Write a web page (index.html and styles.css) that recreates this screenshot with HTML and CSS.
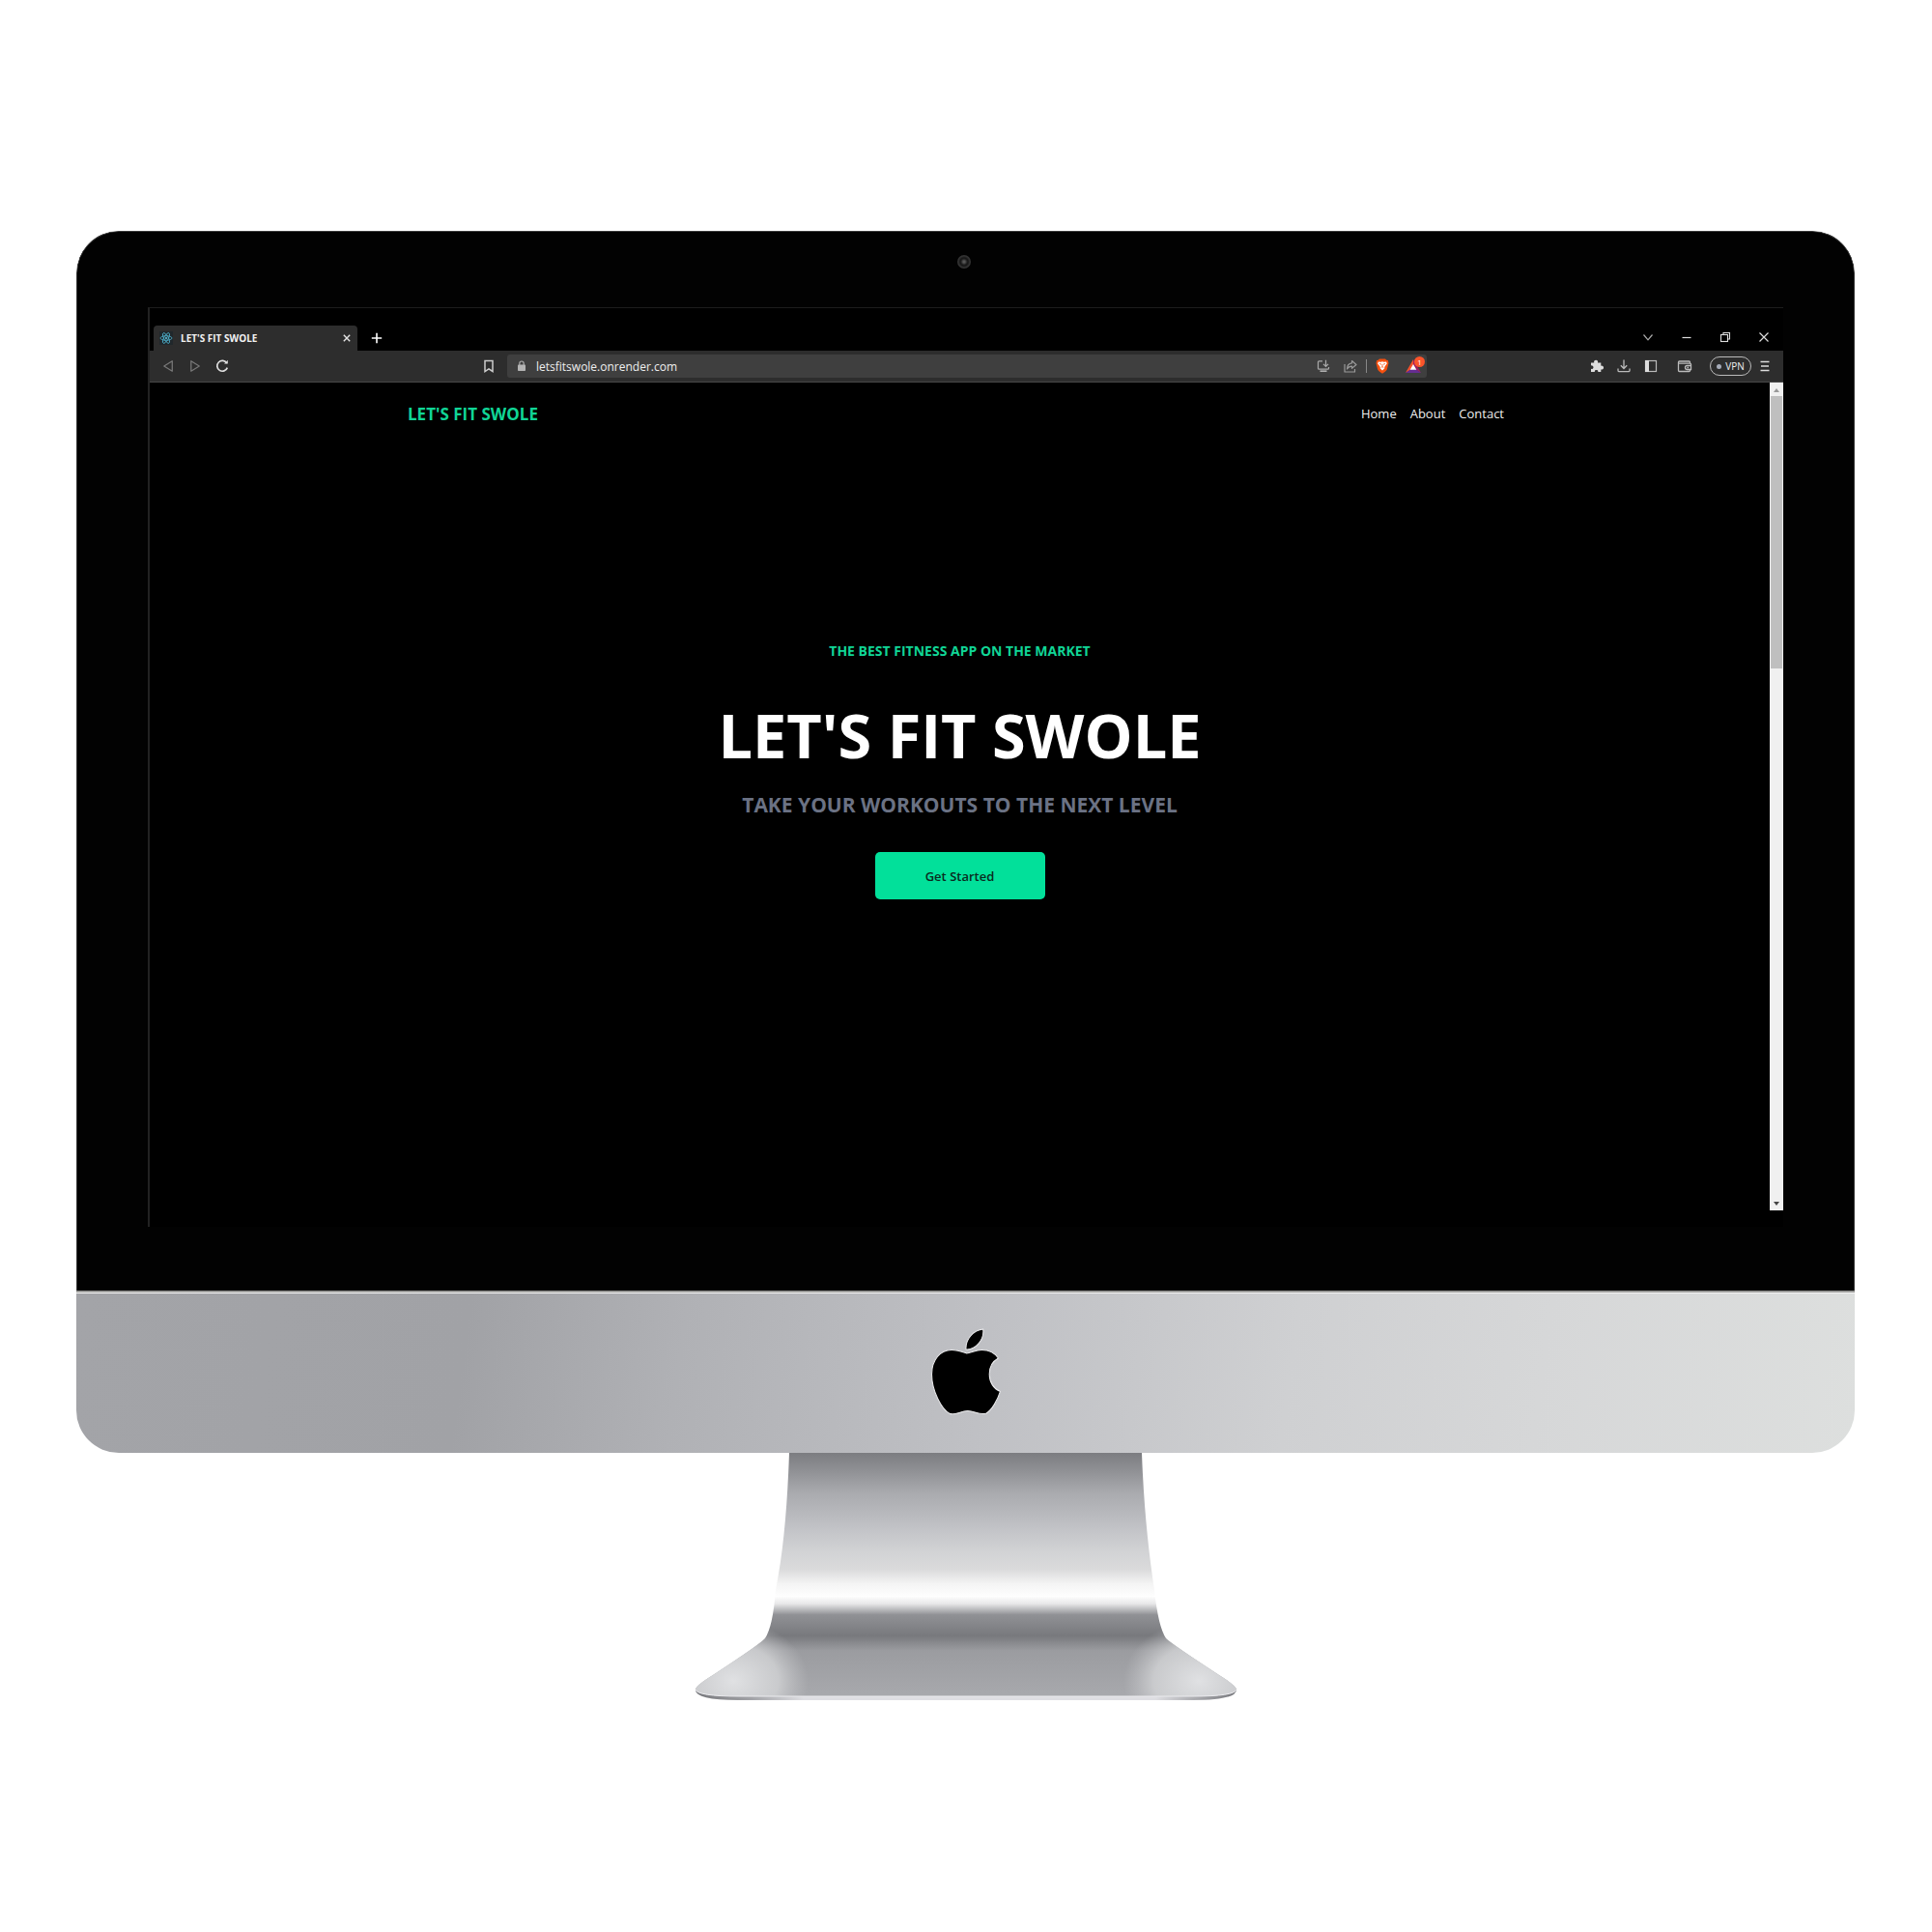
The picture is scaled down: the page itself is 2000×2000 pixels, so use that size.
FILE: index.html
```html
<!DOCTYPE html>
<html lang="en">
<head>
<meta charset="utf-8">
<title>LET'S FIT SWOLE</title>
<link rel="stylesheet" href="styles.css">
</head>
<body>
<div class="monitor">
  <div class="bezel">
    <div class="bezel-top"><span class="camera"></span></div>
    <div class="screen">
      <div class="tab-strip">
        <div class="tab">
          <svg class="favicon" width="14" height="14" viewBox="0 0 14 14" fill="none" stroke="#4fb3cf" stroke-width=".8"><rect width="14" height="14" fill="#20272b" stroke="none"/><ellipse cx="7" cy="7" rx="6" ry="2.3"/><ellipse cx="7" cy="7" rx="6" ry="2.3" transform="rotate(60 7 7)"/><ellipse cx="7" cy="7" rx="6" ry="2.3" transform="rotate(120 7 7)"/><circle cx="7" cy="7" r=".8" fill="#9be4f5"/></svg>
          <span class="tab-title">LET'S FIT SWOLE</span>
          <button class="tab-close" aria-label="Close tab"><svg width="8" height="8" viewBox="0 0 8 8" stroke="#e4e4e4" stroke-width="1.4"><path d="M.8.8l6.4 6.4M7.2.8L.8 7.2"/></svg></button>
        </div>
        <button class="new-tab" aria-label="New tab"><svg width="12" height="12" viewBox="0 0 12 12" stroke="#fff" stroke-width="1.6"><path d="M6 .8v10.4M.8 6h10.4"/></svg></button>
        <div class="window-controls">
          <button aria-label="Search tabs"><svg width="12" height="12" viewBox="0 0 12 12" fill="none" stroke="#aaa" stroke-width="1.2"><path d="M1.5 3.5L6 8.8l4.500-5.300"/></svg></button>
          <button aria-label="Minimize"><svg width="12" height="12" viewBox="0 0 12 12" stroke="#ddd" stroke-width="1.2"><path d="M1.500 6.500h9"/></svg></button>
          <button aria-label="Restore"><svg width="12" height="12" viewBox="0 0 12 12" fill="none" stroke="#ddd" stroke-width="1.1"><rect x="1.500" y="3.500" width="7" height="7"/><path d="M4 3.500v-2h6.500v6.500h-2"/></svg></button>
          <button aria-label="Close window"><svg width="12" height="12" viewBox="0 0 12 12" stroke="#ddd" stroke-width="1.2"><path d="M1.500 1.500l9 9M10.500 1.500l-9 9"/></svg></button>
        </div>
      </div>
      <div class="toolbar">
        <div class="nav-tools">
          <button aria-label="Back"><svg width="12" height="14" viewBox="0 0 12 14" fill="none" stroke="#777" stroke-width="1.300" stroke-linejoin="round"><path d="M10.300 1.800v10.400L1.800 7z"/></svg></button>
          <button aria-label="Forward"><svg width="12" height="14" viewBox="0 0 12 14" fill="none" stroke="#777" stroke-width="1.300" stroke-linejoin="round"><path d="M1.800 1.800v10.400L10.300 7z"/></svg></button>
          <button aria-label="Reload"><svg width="14" height="14" viewBox="0 0 14 14" fill="none" stroke="#ddd" stroke-width="1.700"><path d="M11.800 4A5.400 5.400 0 1 0 12.300 8.600"/><path d="M9 4.500h3.800V.800z" fill="#ddd" stroke="none"/></svg></button>
          <button class="bookmark" aria-label="Bookmark this page"><svg width="12" height="14" viewBox="0 0 12 14" fill="none" stroke="#ccc" stroke-width="1.500"><path d="M2 1.500h8v11L6 9.800 2 12.500z"/></svg></button>
        </div>
        <div class="address">
          <svg width="10" height="12" viewBox="0 0 10 12"><path d="M2.800 5V3.200a2.200 2.200 0 0 1 4.400 0V5" fill="none" stroke="#aaa" stroke-width="1.200"/><rect x="1" y="4.500" width="8" height="6.500" rx=".8" fill="#b4b4b4"/></svg>
          <input class="url" type="text" value="letsfitswole.onrender.com" aria-label="Address">
          <button aria-label="Install app"><svg width="14" height="14" viewBox="0 0 14 14" fill="none" stroke="#aaa" stroke-width="1.200"><path d="M6 1.800H2.500q-1 0-1 1v6.400q0 1 1 1h9q1 0 1-1V8M9.500.800v6M7 4.800l2.500 2.500L12 4.800"/><path d="M3.500 11.500h7v1.300h-7z" fill="#ccc" stroke="none"/></svg></button>
          <button aria-label="Share"><svg width="14" height="14" viewBox="0 0 14 14" fill="none" stroke="#999" stroke-width="1.200" stroke-linejoin="round"><path d="M1 5v8h10.500v-3M8.500 1.500L13 5.500 8.500 9.300V7.200C6 7.200 4.500 8.300 3.500 10c0-3.500 2-5.800 5-6.200z"/></svg></button>
          <span class="divider"></span>
          <button aria-label="Brave Shields"><svg width="14" height="16" viewBox="0 0 14 16"><path d="M4 .5h6l1.300 1.300 1.500.2.700 3-1.700 6.500c-.4 1.500-3 3-4.800 4.200C5.200 14.500 2.600 13 2.200 11.500L.5 5l.7-3 1.500-.2z" fill="#f4500f"/><path d="M3 3.500l2.500.3L7 3.300l1.500.5L11 3.500l.8 1.800-2.600 3.600.2 1.400L7 12.400l-2.400-2.100.2-1.400-2.600-3.600z" fill="#fff"/><path d="M4 5.500l2 .7M10 5.500l-2 .7M7 6v2.500L5.600 9.700M7 8.500l1.400 1.200" stroke="#f4500f" stroke-width=".8" fill="none"/></svg></button>
          <button class="rewards" aria-label="Brave Rewards, 1 new"><svg width="16" height="14" viewBox="0 0 16 14"><path d="M8 0L0 14l8-5z" fill="#f4512c"/><path d="M8 0l8 14-8-5z" fill="#9e1f63"/><path d="M0 14h16L8 8.500z" fill="#662d91"/><path d="M8 5l3.300 5.800H4.700z" fill="#fff"/></svg><span class="badge">1</span></button>
        </div>
        <div class="tools">
          <button aria-label="Extensions"><svg width="14" height="14" viewBox="0 0 14 14" fill="#ddd"><path d="M1 3.500h3.300a2 2 0 1 1 3.600 0h3.400v3.200a2 2 0 1 1 0 3.700V13H8.200a1.700 1.700 0 1 0-3.300 0H1v-3.200a1.800 1.800 0 1 0 0-3.300z"/></svg></button>
          <button aria-label="Downloads"><svg width="14" height="14" viewBox="0 0 14 14" fill="none" stroke="#bbb" stroke-width="1.300"><path d="M7 .5v8.800M3.800 6.300L7 9.500l3.200-3.200M1 9.500v2q0 1.200 1.200 1.200h9.600q1.200 0 1.200-1.200v-2"/></svg></button>
          <button aria-label="Sidebar"><svg width="14" height="14" viewBox="0 0 14 14"><rect x="1.500" y="1.500" width="11" height="11" fill="none" stroke="#bbb" stroke-width="1.200"/><path d="M1 1h4v12H1z" fill="#ddd"/></svg></button>
          <button class="wallet" aria-label="Wallet"><svg width="16" height="14" viewBox="0 0 16 14" fill="none" stroke="#bbb" stroke-width="1.300"><path d="M13.500 4.500V3q0-1-1-1H2.500q-1 0-1 1v8.500q0 1 1 1h10q1 0 1-1V11M1.500 4.200h12q1 0 1 1v6M14.500 6.500h-4a2 2 0 0 0 0 4h4zM10.500 8.500h1.500"/></svg></button>
          <button class="vpn"><span class="vpn-dot"></span>VPN</button>
          <button aria-label="Menu"><svg width="12" height="12" viewBox="0 0 12 12" stroke="#ddd" stroke-width="1.300"><path d="M1.500 1.500h9M2 6h8M1.500 10.500h9"/></svg></button>
        </div>
      </div>
      <div class="viewport">
        <div class="site">
          <header class="site-header">
            <a class="brand" href="#">LET'S FIT SWOLE</a>
            <nav class="site-nav">
              <a href="#">Home</a>
              <a href="#about">About</a>
              <a href="#contact">Contact</a>
            </nav>
          </header>
          <main class="hero">
            <p class="eyebrow">THE BEST FITNESS APP ON THE MARKET</p>
            <h1>LET'S FIT SWOLE</h1>
            <p class="tagline">TAKE YOUR WORKOUTS TO THE NEXT LEVEL</p>
            <button class="cta">Get Started</button>
          </main>
        </div>
        <div class="scrollbar">
          <svg width="6" height="4" viewBox="0 0 6 4" fill="#999"><path d="M3 0l3 4H0z"/></svg>
          <span class="thumb"></span>
          <svg width="6" height="4" viewBox="0 0 6 4" fill="#444"><path d="M0 0h6L3 4z"/></svg>
        </div>
      </div>
    </div>
  </div>
  <div class="chin">
    <svg width="74" height="92" viewBox="70 160 216 270" stroke="#ececee" stroke-width="3"><path d="M178 230C176 200 200 172 230 169C234 200 208 232 178 230Z"/><path d="M180 242C168 238 152 232 134 232C100 232 74 262 74 306C74 356 104 412 128 425C144 432 162 417 183 417C204 417 222 432 240 424C256 415 274 384 282 358C262 350 249 330 249 305C249 284 260 266 276 257C266 242 248 232 226 232C208 232 194 240 180 242Z"/></svg>
  </div>
</div>
<svg class="stand" width="562" height="257" viewBox="719 1504 562 257">
  <defs>
    <linearGradient id="metal" gradientUnits="userSpaceOnUse" x1="0" y1="1504" x2="0" y2="1760">
      <stop offset="0" stop-color="#7c7d81"/><stop offset=".06" stop-color="#8c8d91"/><stop offset=".16" stop-color="#a9aaae"/><stop offset=".3" stop-color="#c1c2c6"/><stop offset=".4" stop-color="#d2d3d5"/><stop offset=".47" stop-color="#dadadb"/><stop offset=".53" stop-color="#f4f4f4"/><stop offset=".58" stop-color="#fefefe"/><stop offset=".61" stop-color="#e8e8e9"/><stop offset=".655" stop-color="#909195"/><stop offset=".74" stop-color="#78797d"/><stop offset=".8" stop-color="#9b9ca0"/><stop offset="1" stop-color="#a9aaae"/>
    </linearGradient>
    <radialGradient id="glow">
      <stop offset="0" stop-color="#e0e1e3"/><stop offset=".6" stop-color="#d3d4d6" stop-opacity=".8"/><stop offset="1" stop-color="#c5c6c9" stop-opacity="0"/>
    </radialGradient>
    <linearGradient id="edge">
      <stop offset="0" stop-color="#77787c"/><stop offset=".1" stop-color="#a0a1a5"/><stop offset=".2" stop-color="#dedee2"/><stop offset=".85" stop-color="#dedee2"/><stop offset="1" stop-color="#77787c"/>
    </linearGradient>
    <clipPath id="foot"><path d="M817 1504H1182C1184 1560 1189 1606 1195 1646Q1199 1684 1207 1696Q1213 1702 1262 1734Q1280 1745 1280 1749Q1278 1756 1235 1756H765Q722 1756 720 1749Q720 1745 738 1734Q787 1702 792 1696Q800 1684 803 1646C811 1606 815 1560 817 1504Z"/></clipPath>
  </defs>
  <path d="M720 1748Q718 1760 765 1760H1235Q1282 1760 1280 1748Z" fill="url(#edge)"/>
  <g clip-path="url(#foot)">
    <path d="M719 1504h562v257H719z" fill="url(#metal)"/>
    <ellipse cx="759" cy="1740" rx="78" ry="62" fill="url(#glow)"/>
    <ellipse cx="1241" cy="1740" rx="78" ry="62" fill="url(#glow)"/>
  </g>
  <path d="M720 1749Q722 1756 765 1756H1235Q1278 1756 1280 1749" fill="none" stroke="#ececef"/>
</svg>
</body>
</html>
```
FILE: styles.css
```css
* { box-sizing: border-box; }

body {
  margin: 0;
  padding: 239px 80px 0 79px;
  background: #fff;
  font-family: "Open Sans", "Noto Sans", sans-serif;
  display: flex;
  flex-direction: column;
  align-items: center;
}

h1, p { margin: 0; }
a { text-decoration: none; }
svg { display: block; flex: none; }

button {
  border: 0;
  padding: 0;
  background: none;
  font-family: inherit;
  display: flex;
  align-items: center;
  justify-content: center;
  flex: none;
}

/* Computer body */
.monitor {
  width: 100%;
  border-radius: 44px;
  overflow: hidden;
}
.bezel {
  background: #020202;
  padding: 0 73px 66px;
  border: 1px solid #3a3a3a;
  border-bottom: 0;
  border-radius: 44px 44px 0 0;
}
.bezel-top {
  height: 78px;
  padding: 24px 4px 0 0;
  display: flex;
  justify-content: center;
}
.camera {
  width: 14px;
  height: 14px;
  border-radius: 50%;
  background: radial-gradient(circle, #555 0 1px, #222 3px, #151515 4px, #333 6px);
}
.chin {
  height: 168px;
  padding-bottom: 4px;
  border-top: 2px solid #9b9b99;
  box-shadow: inset 0 1px #f4f4f4;
  background: linear-gradient(98deg, #a3a4a8 0%, #a1a2a6 22%, #b0b1b5 34%, #bfc0c4 51%, #cfd0d2 68%, #d6d7d8 82%, #dddfde 100%);
  display: flex;
  align-items: center;
  justify-content: center;
}

/* Browser window */
.screen {
  background: #000;
  border-top: 1px solid #1c1c1c;
  border-left: 2px solid #222;
  padding-bottom: 17px;
}
.tab-strip {
  height: 44px;
  padding-left: 4px;
  display: flex;
  align-items: flex-end;
}
.tab {
  width: 211px;
  height: 26px;
  padding: 0 6px 1px;
  background: #2d2d2d;
  border-radius: 4px 4px 0 0;
  display: flex;
  align-items: center;
}
.tab-title {
  flex: 1;
  padding-left: 8px;
  color: #f2f2f2;
  font-size: 10px;
  line-height: 14px;
  font-weight: 700;
}
.tab-close { width: 10px; height: 24px; }
.new-tab { width: 40px; height: 26px; }
.window-controls {
  margin-left: auto;
  display: flex;
}
.window-controls button { width: 40px; height: 28px; }

.toolbar {
  height: 33px;
  padding: 0 5px;
  background: #2d2d2d;
  border-bottom: 1px solid #484848;
  display: flex;
  align-items: center;
}
.toolbar button { width: 28px; height: 24px; }
.nav-tools {
  width: 365px;
  padding-right: 5px;
  display: flex;
}
.nav-tools .bookmark { margin-left: auto; }
.address {
  flex: 1;
  height: 24px;
  padding: 0 0 0 10px;
  background: #3f3f3f;
  border-radius: 3px;
  display: flex;
  align-items: center;
}
.url {
  flex: 1;
  min-width: 0;
  height: 24px;
  padding: 0 10px;
  border: 0;
  background: none;
  color: #eee;
  font-family: inherit;
  font-size: 12px;
}
.divider { width: 1px; height: 14px; margin: 0 2px; background: #888; }
.toolbar .rewards { position: relative; margin-left: 4px; }
.badge {
  position: absolute;
  top: 2px;
  right: 2px;
  width: 11px;
  height: 11px;
  border-radius: 50%;
  background: #fb542b;
  color: #fff;
  font-size: 8px;
  line-height: 11px;
  text-align: center;
}
.tools {
  width: 364px;
  display: flex;
  align-items: center;
  justify-content: flex-end;
}
.tools .wallet { margin: 0 12px 0 7px; }
.toolbar .vpn {
  width: 43px;
  height: 20px;
  gap: 4px;
  border: 1px solid #bbb;
  border-radius: 10px;
  color: #eee;
  font-size: 10px;
}
.vpn-dot { width: 5px; height: 5px; border-radius: 50%; background: #a5abb8; }

.viewport { display: flex; }
.scrollbar {
  width: 14px;
  padding: 6px 1px 5px;
  background: #f0f0f0;
  display: flex;
  flex-direction: column;
  align-items: center;
}
.scrollbar .thumb {
  width: 12px;
  height: 282px;
  margin: 4px 0 auto;
  background: #bfbfbf;
}

/* Site */
.site { flex: 1; min-height: 857px; }
.site-header {
  height: 64px;
  padding: 0 275px 0 267px;
  display: flex;
  align-items: center;
  justify-content: space-between;
}
.brand { color: #10d596; font-size: 17px; font-weight: 700; }
.site-nav { display: flex; gap: 14px; }
.site-nav a { color: #eee; font-size: 13px; }
.hero {
  padding-top: 204px;
  display: flex;
  flex-direction: column;
  align-items: center;
  text-align: center;
}
.eyebrow { color: #10d596; font-size: 14px; line-height: 20px; font-weight: 700; }
.hero h1 { margin-top: 41px; color: #fff; font-size: 63px; line-height: 72px; font-weight: 700; }
.tagline { margin-top: 22px; color: #6b7284; font-size: 21px; line-height: 28px; font-weight: 700; }
.cta {
  width: 176px;
  height: 49px;
  margin-top: 35px;
  border-radius: 5px;
  background: #02e09a;
  color: #0a2a20;
  font-size: 13px;
  font-weight: 600;
}

.stand { margin-left: 1px; }
```
